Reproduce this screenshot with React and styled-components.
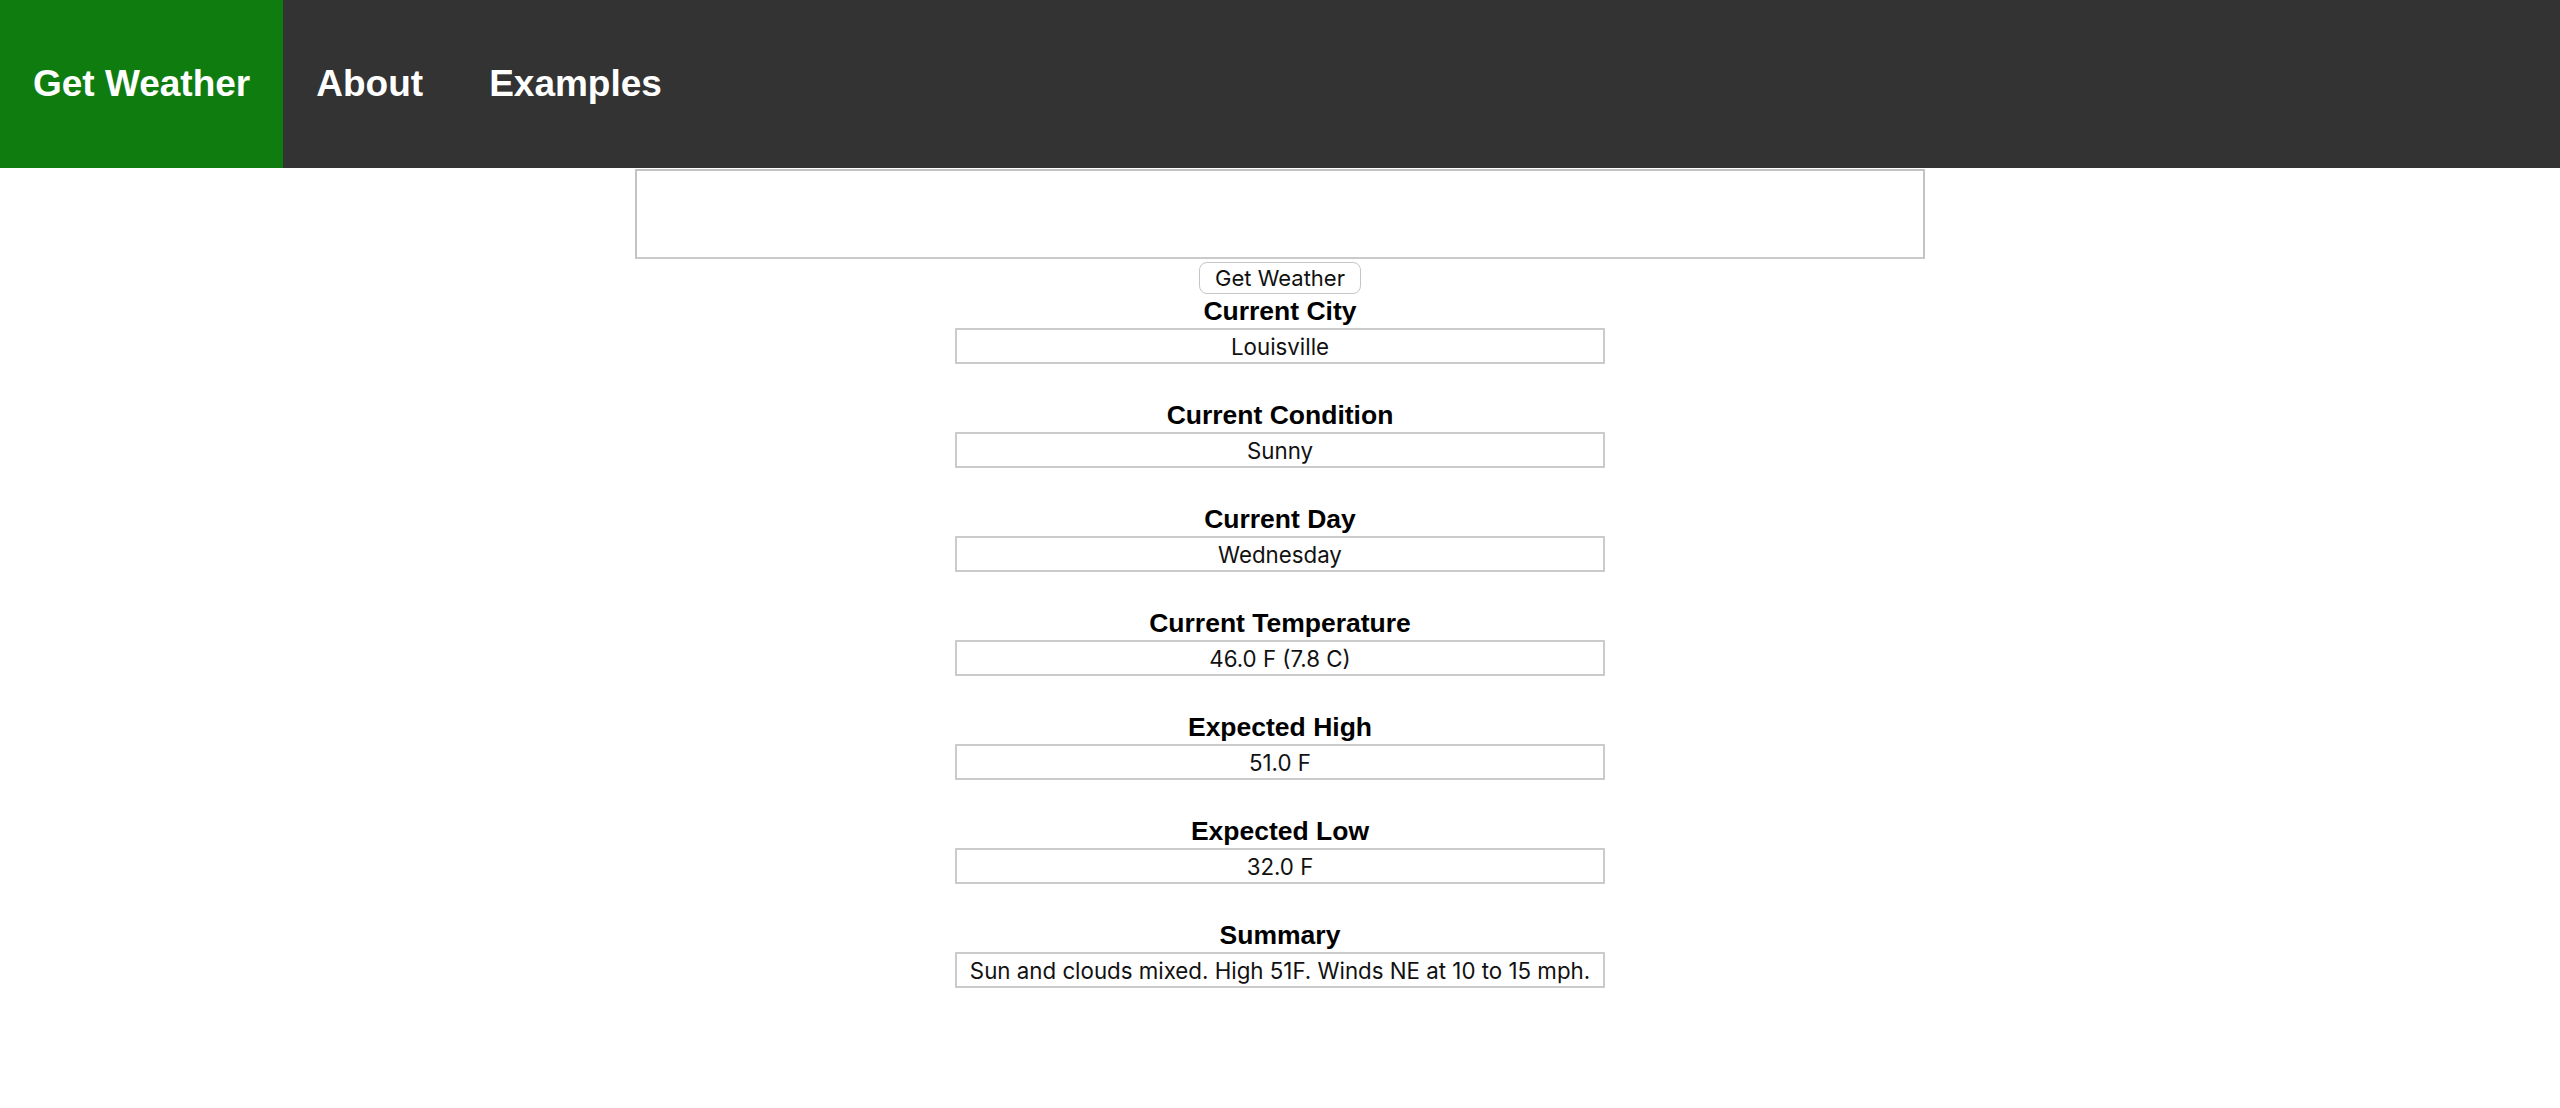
import React from "react";
import styled, { createGlobalStyle } from "styled-components";

const GlobalStyle = createGlobalStyle`
    body {
        margin: 0;
        background: #fff;
        font-family: "Liberation Sans", Arial, sans-serif;
    }
`;

const weather = [
    { label: "Current City", value: "Louisville" },
    { label: "Current Condition", value: "Sunny" },
    { label: "Current Day", value: "Wednesday" },
    { label: "Current Temperature", value: "46.0 F (7.8 C)" },
    { label: "Expected High", value: "51.0 F" },
    { label: "Expected Low", value: "32.0 F" },
    { label: "Summary", value: "Sun and clouds mixed. High 51F. Winds NE at 10 to 15 mph." },
];

const TopNav = styled.nav`
    display: flex;
    height: 168px;
    background-color: #333;
`;

const NavLink = styled.a`
    display: flex;
    align-items: center;
    padding: 0 33px;
    background-color: ${({ active }) => (active ? "#0f7c10" : "transparent")};
    color: #fff;
    font-family: "Liberation Sans", Arial, sans-serif;
    font-weight: 700;
    font-size: 37px;
    text-decoration: none;
    cursor: pointer;
`;

const Main = styled.main`
    display: flex;
    flex-direction: column;
    align-items: center;
`;

const CityInput = styled.input`
    box-sizing: border-box;
    width: 1290px;
    height: 90px;
    margin-top: 1px;
    border: 2px solid #c3c3c3;
    border-bottom-color: #cacaca;
    outline: none;
    font-family: Inter, sans-serif;
    font-size: 22px;
`;

const Button = styled.button`
    box-sizing: border-box;
    height: 32px;
    margin-top: 3px;
    padding: 0 15px;
    background: #fff;
    border: 1px solid #c6c6c6;
    border-radius: 8px;
    color: #111;
    font-family: Inter, sans-serif;
    font-size: 22px;
    cursor: pointer;
`;

const Results = styled.div`
    display: flex;
    flex-direction: column;
    align-items: center;
    margin-top: 2px;
`;

const Field = styled.div`
    display: flex;
    flex-direction: column;
    align-items: center;
    margin-bottom: 36.5px;
`;

const Label = styled.div`
    font-family: "Liberation Sans", Arial, sans-serif;
    font-weight: 700;
    font-size: 26.5px;
    line-height: 31.5px;
    color: #000;
`;

const Value = styled.div`
    box-sizing: border-box;
    display: flex;
    align-items: center;
    justify-content: center;
    width: 650px;
    height: 36px;
    padding-top: 1px;
    border: 2px solid #cbcbcb;
    font-family: Inter, sans-serif;
    font-size: 22.3px;
    color: #111;
    white-space: nowrap;
`;

const App = () => {
    return (
        <>
            <GlobalStyle />
            <TopNav>
                <NavLink active>Get Weather</NavLink>
                <NavLink>About</NavLink>
                <NavLink>Examples</NavLink>
            </TopNav>
            <Main>
                <CityInput type="text" />
                <Button>Get Weather</Button>
                <Results>
                    {weather.map((item) => (
                        <Field key={item.label}>
                            <Label>{item.label}</Label>
                            <Value>{item.value}</Value>
                        </Field>
                    ))}
                </Results>
            </Main>
        </>
    );
};

export default App;
